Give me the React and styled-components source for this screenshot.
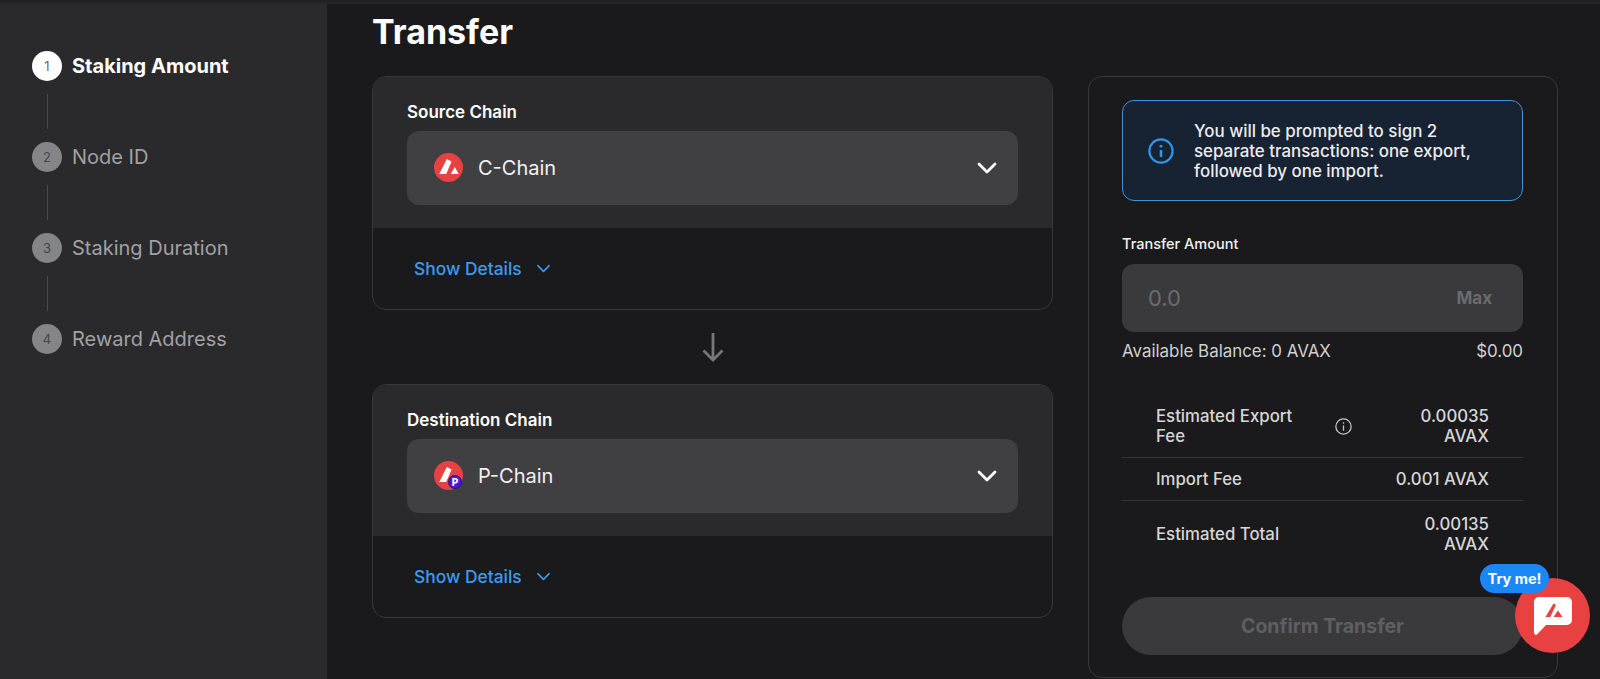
import React from 'react';
import styled, { createGlobalStyle } from 'styled-components';

const GlobalStyle = createGlobalStyle`
  html, body {
    margin: 0;
    height: 679px;
    overflow: hidden;
    background: #1a1a1c;
    font-family: Inter, 'Liberation Sans', sans-serif;
  }
  * { box-sizing: border-box; }
`;

const Page = styled.div`
  position: relative;
  display: flex;
  flex-direction: column;
  width: 1600px;
  height: 679px;
  overflow: hidden;
  background: #1a1a1c;
`;

const TopEdge = styled.div`
  height: 4px;
  flex: none;
  background: linear-gradient(to bottom, #1e1e20, #29292b);
`;

const Body = styled.div`
  display: flex;
  flex: 1;
  min-height: 0;
`;

const Sidebar = styled.aside`
  width: 327px;
  flex: none;
  background: #2a2a2c;
  padding: 46.5px 0 0 32px;
`;

const Step = styled.div`
  display: flex;
  align-items: center;
  gap: 10px;
  height: 30px;
`;

const StepDot = styled.span`
  width: 30px;
  height: 30px;
  border-radius: 50%;
  flex: none;
  display: flex;
  align-items: center;
  justify-content: center;
  font-size: 13px;
  color: ${(p) => (p.$active ? '#6b6b6e' : '#444447')};
  background: ${(p) => (p.$active ? '#ffffff' : '#858588')};
`;

const StepLabel = styled.span`
  font-size: 20px;
  font-weight: ${(p) => (p.$active ? 700 : 400)};
  color: ${(p) => (p.$active ? '#ffffff' : '#a1a1a4')};
`;

const StepLine = styled.div`
  width: 1px;
  height: 35px;
  margin: 13px 0 13px 14.5px;
  background: #4a4a4d;
`;

const Main = styled.main`
  flex: 1;
  padding-left: 45px;
`;

const Title = styled.h1`
  margin: 0;
  height: 72px;
  padding-top: 7px;
  font-size: 34px;
  line-height: 42px;
  font-weight: 700;
  color: #ffffff;
`;

const Columns = styled.div`
  display: flex;
  align-items: flex-start;
  gap: 35px;
`;

const LeftColumn = styled.div`
  width: 681px;
  display: flex;
  flex-direction: column;
`;

const ChainCard = styled.section`
  height: 234px;
  border: 1px solid #38383b;
  border-radius: 14px;
  overflow: hidden;
`;

const ChainTop = styled.div`
  height: 151px;
  padding: 25px 34px 0;
  background: #2a2a2c;
`;

const ChainLabel = styled.div`
  font-size: 17px;
  line-height: 20px;
  font-weight: 600;
  color: #ffffff;
  margin-bottom: 8.5px;
`;

const Select = styled.div`
  height: 74px;
  border-radius: 12px;
  background: #404042;
  display: flex;
  align-items: center;
  padding: 0 19px 0 27px;
  color: #f1f1f1;
  font-size: 20px;
`;

const SelectName = styled.span`
  flex: 1;
  margin-left: 15px;
`;

const ChainIconWrap = styled.span`
  position: relative;
  width: 29px;
  height: 29px;
  flex: none;
  display: block;
`;

const ChainBadge = styled.svg`
  position: absolute;
  right: 1px;
  bottom: 1px;
`;

const DetailsRow = styled.div`
  height: 81px;
  padding-left: 41px;
  display: flex;
  align-items: center;
  gap: 13px;
  color: #3a9bf0;
  font-size: 17.4px;
  font-weight: 500;
`;

const ArrowRow = styled.div`
  height: 74px;
  display: flex;
  align-items: center;
  justify-content: center;
  color: #77777a;
`;

const Panel = styled.section`
  width: 470px;
  height: 602px;
  border: 1px solid #38383b;
  border-radius: 14px;
  padding: 23px 34px 0 33px;
`;

const Notice = styled.div`
  height: 101px;
  border: 1px solid #3f93d8;
  border-radius: 12px;
  background: #172333;
  display: flex;
  align-items: center;
  padding: 0 0 0 25px;
  gap: 20px;
  color: #ececec;
  font-size: 16.9px;
  line-height: 20px;
  font-weight: 500;
`;

const NoticeText = styled.div`
  width: 300px;
`;

const FieldLabel = styled.div`
  margin-top: 33px;
  font-size: 14.5px;
  line-height: 20px;
  font-weight: 500;
  color: #f0f0f0;
`;

const AmountInput = styled.div`
  height: 68px;
  margin-top: 10px;
  border-radius: 12px;
  background: #3a3a3d;
  display: flex;
  align-items: center;
  justify-content: space-between;
  padding: 0 31px 0 26px;
  color: #6b6b6e;
`;

const AmountValue = styled.span`
  font-size: 22px;
`;

const MaxLabel = styled.span`
  font-size: 17px;
  font-weight: 700;
`;

const BalanceRow = styled.div`
  margin-top: 9px;
  display: flex;
  justify-content: space-between;
  font-size: 16.9px;
  line-height: 20px;
  color: #d0d0d2;
`;

const FeeTable = styled.div`
  margin-top: 34px;
`;

const FeeRow = styled.div`
  display: grid;
  grid-template-columns: 171px 32px 1fr;
  align-items: center;
  padding: 0 34px;
  height: ${(p) => p.$height}px;
  border-bottom: ${(p) => (p.$last ? 'none' : '1px solid #343437')};
  font-size: 16.8px;
  line-height: 20px;
  font-weight: 500;
  color: #d6d6d8;
`;

const FeeName = styled.div`
  grid-column: ${(p) => (p.$wide ? '1 / 3' : '1')};
  max-width: ${(p) => (p.$wide ? 'none' : '150px')};
`;

const FeeValue = styled.div`
  grid-column: 3;
  justify-self: end;
  width: ${(p) => (p.$narrow ? '96px' : 'auto')};
  text-align: right;
`;

const InfoMark = styled.span`
  display: flex;
  justify-content: center;
  color: #c8c8ca;
`;

const ConfirmButton = styled.button`
  display: block;
  width: 401px;
  height: 58px;
  margin-top: 31px;
  border: none;
  border-radius: 29px;
  background: #3a3a3d;
  color: #5f5f62;
  font-family: inherit;
  font-size: 19.5px;
  font-weight: 700;
`;

const HelpButton = styled.div`
  position: absolute;
  left: 1515px;
  top: 578px;
  width: 75px;
  height: 75px;
  border-radius: 50%;
  background: #e84142;
  display: flex;
  align-items: center;
  justify-content: center;
`;

const TryMe = styled.div`
  position: absolute;
  left: 1480px;
  top: 564px;
  width: 69px;
  height: 29px;
  border-radius: 15px;
  background: #1a87f5;
  color: #ffffff;
  font-size: 14.5px;
  font-weight: 700;
  display: flex;
  align-items: center;
  justify-content: center;
`;

const AvaxMark = () => (
  <svg width="29" height="29" viewBox="0 0 29 29" style={{ display: 'block' }}>
    <circle cx="14.5" cy="14.5" r="14.5" fill="#e84142" />
    <path d="M12.8 6 L17.6 8.6 L12.2 21 L5.3 21 Z" fill="#fff" />
    <path d="M20.8 14 L24.7 21 L16.7 21 Z" fill="#fff" />
  </svg>
);

const Chevron = ({ size, color, width }) => (
  <svg width={size} height={size} viewBox="0 0 24 24" fill="none" stroke={color} strokeWidth={width} strokeLinecap="round" strokeLinejoin="round">
    <path d="M4 8 L12 16 L20 8" />
  </svg>
);

const steps = ['Staking Amount', 'Node ID', 'Staking Duration', 'Reward Address'];

const Chain = ({ label, name, pChain }) => (
  <ChainCard>
    <ChainTop>
      <ChainLabel>{label}</ChainLabel>
      <Select>
        <ChainIconWrap>
          <AvaxMark />
          {pChain && (
            <ChainBadge width="14" height="14" viewBox="0 0 14 14">
              <circle cx="7" cy="7" r="6.6" fill="#4a14e6" stroke="#2b1a55" strokeWidth="0.8" />
              <text x="7" y="10.6" textAnchor="middle" fontSize="10" fontWeight="800" fontFamily="Inter, sans-serif" fill="#fff">P</text>
            </ChainBadge>
          )}
        </ChainIconWrap>
        <SelectName>{name}</SelectName>
        <Chevron size={24} color="#ffffff" width={2.8} />
      </Select>
    </ChainTop>
    <DetailsRow>
      Show Details
      <Chevron size={17} color="#3a9bf0" width={2.2} />
    </DetailsRow>
  </ChainCard>
);

export default function App() {
  return (
    <Page>
      <GlobalStyle />
      <TopEdge />
      <Body>
        <Sidebar>
          {steps.map((step, i) => (
            <React.Fragment key={step}>
              <Step>
                <StepDot $active={i === 0}>{i + 1}</StepDot>
                <StepLabel $active={i === 0}>{step}</StepLabel>
              </Step>
              {i < steps.length - 1 && <StepLine />}
            </React.Fragment>
          ))}
        </Sidebar>
        <Main>
          <Title>Transfer</Title>
          <Columns>
            <LeftColumn>
              <Chain label="Source Chain" name="C-Chain" />
              <ArrowRow>
                <svg width="24" height="32" viewBox="0 0 24 32" fill="none" stroke="currentColor" strokeWidth="2.8" strokeLinejoin="miter">
                  <path d="M12 2 V29 M2.5 19.5 L12 29 L21.5 19.5" />
                </svg>
              </ArrowRow>
              <Chain label="Destination Chain" name="P-Chain" pChain />
            </LeftColumn>
            <Panel>
              <Notice>
                <svg width="26" height="26" viewBox="0 0 26 26" fill="none" stroke="#2f95ee" strokeWidth="2.2" style={{ flex: 'none' }}>
                  <circle cx="13" cy="13" r="11.6" />
                  <path d="M13 12 V19" strokeWidth="2.6" />
                  <path d="M13 7 V9.4" strokeWidth="2.8" />
                </svg>
                <NoticeText>You will be prompted to sign 2 separate transactions: one export, followed by one import.</NoticeText>
              </Notice>
              <FieldLabel>Transfer Amount</FieldLabel>
              <AmountInput>
                <AmountValue>0.0</AmountValue>
                <MaxLabel>Max</MaxLabel>
              </AmountInput>
              <BalanceRow>
                <span>Available Balance: 0 AVAX</span>
                <span>$0.00</span>
              </BalanceRow>
              <FeeTable>
                <FeeRow $height={63}>
                  <FeeName>Estimated Export Fee</FeeName>
                  <InfoMark>
                    <svg width="17" height="17" viewBox="0 0 16 16" fill="none" stroke="currentColor" strokeWidth="1.2">
                      <circle cx="8" cy="8" r="7.2" />
                      <path d="M8 7 V12" />
                      <path d="M8 4 V5.4" />
                    </svg>
                  </InfoMark>
                  <FeeValue $narrow>0.00035 AVAX</FeeValue>
                </FeeRow>
                <FeeRow $height={43}>
                  <FeeName $wide>Import Fee</FeeName>
                  <FeeValue>0.001 AVAX</FeeValue>
                </FeeRow>
                <FeeRow $height={65} $last>
                  <FeeName $wide>Estimated Total</FeeName>
                  <FeeValue $narrow>0.00135 AVAX</FeeValue>
                </FeeRow>
              </FeeTable>
              <ConfirmButton>Confirm Transfer</ConfirmButton>
            </Panel>
          </Columns>
        </Main>
      </Body>
      <HelpButton>
        <svg width="40" height="40" viewBox="0 0 40 40">
          <path d="M6 1 H34 A5 5 0 0 1 39 6 V24 A5 5 0 0 1 34 29 H13 L4.5 38 A2 2 0 0 1 1 37 V6 A5 5 0 0 1 6 1 Z" fill="#fff" />
          <path d="M20.5 7.5 L23 9 L17.3 21 L12.5 21 Z" fill="#e84142" />
          <path d="M25 14.5 L29.5 21 L20.5 21 Z" fill="#e84142" />
        </svg>
      </HelpButton>
      <TryMe>Try me!</TryMe>
    </Page>
  );
}
